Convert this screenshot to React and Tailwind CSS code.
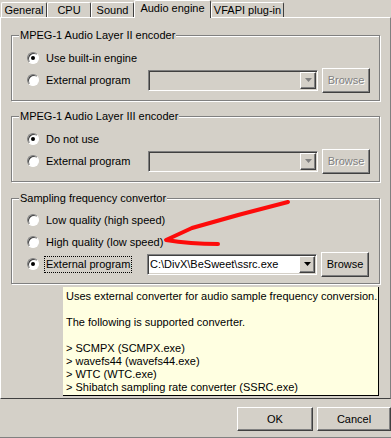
import React from 'react';

const sunken = 'border border-t-[#808080] border-l-[#808080] border-b-white border-r-white shadow-[inset_1px_1px_0_#404040,inset_-1px_-1px_0_#d4d0c8]';
const raised = 'border border-t-white border-l-white border-b-[#404040] border-r-[#404040] shadow-[inset_-1px_-1px_0_#808080]';

function Radio({ checked, label, focused }) {
  return (
    <div className="flex items-center">
      <div className="w-[12px] h-[12px] rounded-full bg-white border border-t-[#808080] border-l-[#808080] border-b-white border-r-white shadow-[inset_1px_1px_0_#404040] flex items-center justify-center">
        {checked && <div className="w-[4px] h-[4px] rounded-full bg-black" />}
      </div>
      <span className={`ml-[5px] px-[1px] py-[1px] leading-[13px] border border-dotted ${focused ? 'border-black' : 'border-transparent'}`}>
        {label}
      </span>
    </div>
  );
}

function Combo({ value, enabled }) {
  return (
    <div className={`w-[170px] h-[21px] flex items-center ${sunken} ${enabled ? 'bg-white' : 'bg-[#d4d0c8]'}`}>
      <div className="flex-1 pl-[2px] whitespace-nowrap overflow-hidden">{value}</div>
      <div className={`w-[16px] h-[17px] mr-[1px] flex items-center justify-center bg-[#d4d0c8] ${raised}`}>
        <svg width="7" height="4" viewBox="0 0 7 4">
          <path d="M0 0h7L3.5 4z" fill={enabled ? '#000' : '#808080'} />
        </svg>
      </div>
    </div>
  );
}

function BrowseButton({ enabled }) {
  return (
    <div className={`ml-[4px] w-[48px] h-[25px] flex items-center justify-center ${raised} ${enabled ? 'text-black' : 'text-[#808080] [text-shadow:1px_1px_0_#fff]'}`}>
      Browse
    </div>
  );
}

function Group({ title, className, children }) {
  return (
    <div className={`relative border border-[#808080] shadow-[inset_1px_1px_0_#fff,1px_1px_0_#fff] ${className}`}>
      <span className="absolute left-[7px] -top-[7px] px-[1px] leading-[13px] bg-[#d4d0c8]">{title}</span>
      {children}
    </div>
  );
}

function Tab({ label, width, selected }) {
  if (selected) {
    return (
      <div className="relative z-10 h-[18px] -mb-[1px] flex items-start justify-center pt-[1px] bg-[#d4d0c8] border-t border-l border-r border-t-white border-l-white border-r-[#404040] rounded-t-[2px]" style={{ width }}>
        {label}
      </div>
    );
  }
  return (
    <div className="h-[15px] flex items-center justify-center border-t border-l border-r border-t-white border-l-white border-r-[#404040] rounded-t-[2px]" style={{ width }}>
      {label}
    </div>
  );
}

export default function App() {
  return (
    <div className="relative w-[391px] h-[438px] overflow-hidden bg-[#d4d0c8] text-black text-[11px] leading-[13px] [font-family:'Liberation_Sans',Arial,sans-serif] border-b border-[#808080]">
      {/* Tabs */}
      <div className="h-[17px] flex items-end pl-[1px]">
        <Tab label="General" width={46} />
        <Tab label="CPU" width={44} />
        <Tab label="Sound" width={43} />
        <Tab label="Audio engine" width={77} selected />
        <Tab label="VFAPI plug-in" width={73} />
      </div>

      {/* Panel */}
      <div className="h-[382px] border-t border-l border-r border-b border-t-white border-l-white border-r-[#808080] border-b-[#404040] px-[10px]">
        <Group title="MPEG-1 Audio Layer II encoder" className="mt-[17px] pt-[11px] pb-[9px]">
          <div className="h-[22px] flex items-center pl-[15px]">
            <Radio checked label="Use built-in engine" />
          </div>
          <div className="h-[22px] flex items-center pl-[15px]">
            <div className="w-[121px]"><Radio label="External program" /></div>
            <Combo enabled={false} />
            <BrowseButton enabled={false} />
          </div>
        </Group>

        <Group title="MPEG-1 Audio Layer III encoder" className="mt-[15px] pt-[11px] pb-[9px]">
          <div className="h-[22px] flex items-center pl-[15px]">
            <Radio checked label="Do not use" />
          </div>
          <div className="h-[22px] flex items-center pl-[15px]">
            <div className="w-[121px]"><Radio label="External program" /></div>
            <Combo enabled={false} />
            <BrowseButton enabled={false} />
          </div>
        </Group>

        <Group title="Sampling frequency convertor" className="mt-[16px] pt-[10px] pb-[8px]">
          <div className="h-[22px] flex items-center pl-[15px]">
            <Radio label="Low quality (high speed)" />
          </div>
          <div className="h-[22px] flex items-center pl-[15px]">
            <Radio label="High quality (low speed)" />
          </div>
          <div className="h-[22px] flex items-center pl-[15px]">
            <div className="w-[120px]"><Radio checked focused label="External program" /></div>
            <Combo enabled value="C:\DivX\BeSweet\ssrc.exe" />
            <BrowseButton enabled />
          </div>
        </Group>
      </div>

      {/* Buttons */}
      <div className="mt-[8px] flex justify-end gap-[4px]">
        <div className={`w-[76px] h-[24px] flex items-center justify-center ${raised}`}>OK</div>
        <div className={`w-[74px] h-[24px] flex items-center justify-center ${raised}`}>Cancel</div>
      </div>

      {/* Tooltip */}
      <div className="absolute left-[63px] top-[287px] w-[316px] h-[109px] bg-[#ffffe1] border-r border-b border-black pl-[3px] pt-[3px] z-20">
        <div>Uses external converter for audio sample frequency conversion.</div>
        <div>&nbsp;</div>
        <div>The following is supported converter.</div>
        <div>&nbsp;</div>
        <div>&gt; SCMPX (SCMPX.exe)</div>
        <div>&gt; wavefs44 (wavefs44.exe)</div>
        <div>&gt; WTC (WTC.exe)</div>
        <div>&gt; Shibatch sampling rate converter (SSRC.exe)</div>
      </div>

      {/* Red arrow annotation */}
      <svg className="absolute left-0 top-0 pointer-events-none z-30" width="391" height="438" viewBox="0 0 391 438">
        <path d="M288 202 Q 240 214 192 228 L 166 240 Q 190 244 218 244" fill="none" stroke="#ff0000" strokeWidth="4" strokeLinecap="round" strokeLinejoin="round" opacity="0.95" />
      </svg>
    </div>
  );
}
